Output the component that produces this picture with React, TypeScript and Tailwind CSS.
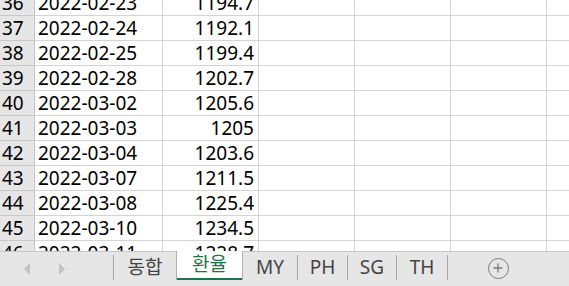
import { Plus } from 'lucide-react';

const ROWS: [number, string, string][] = [
  [36, '2022-02-23', '1194.7'],
  [37, '2022-02-24', '1192.1'],
  [38, '2022-02-25', '1199.4'],
  [39, '2022-02-28', '1202.7'],
  [40, '2022-03-02', '1205.6'],
  [41, '2022-03-03', '1205'],
  [42, '2022-03-04', '1203.6'],
  [43, '2022-03-07', '1211.5'],
  [44, '2022-03-08', '1225.4'],
  [45, '2022-03-10', '1234.5'],
  [46, '2022-03-11', '1228.7'],
];

const TABS = [
  { label: 'MY', w: 'w-[54px]' },
  { label: 'PH', w: 'w-[49px]' },
  { label: 'SG', w: 'w-[48px]' },
  { label: 'TH', w: 'w-[50px]' },
];

const font = { fontFamily: '"Noto Sans", "Noto Sans CJK KR", sans-serif' };

export default function App() {
  return (
    <div className="w-[569px] h-[286px] bg-white overflow-hidden flex flex-col" style={font}>
      {/* Sheet grid */}
      <div className="h-[251px] overflow-hidden">
        <div className="-mt-[9px]">
          {ROWS.map(([n, date, rate]) => (
            <div key={n} className="flex h-[25px] text-[19px] leading-[24px] text-black">
              <div className="w-[35px] shrink-0 bg-[#e6e6e6] border-r border-b border-r-[#c4c4c4] border-b-[#c8c8c8] pl-[2px]">
                {n}
              </div>
              <div className="w-[128px] shrink-0 border-r border-b border-[#d4d4d4] pl-[3px]">{date}</div>
              <div className="w-[96px] shrink-0 border-r border-b border-[#d4d4d4] pr-[4px] text-right">{rate}</div>
              <div className="w-[96px] shrink-0 border-r border-b border-[#d4d4d4]" />
              <div className="w-[96px] shrink-0 border-r border-b border-[#d4d4d4]" />
              <div className="w-[96px] shrink-0 border-r border-b border-[#d4d4d4]" />
              <div className="flex-1 border-b border-[#d4d4d4]" />
            </div>
          ))}
        </div>
      </div>

      {/* Sheet tabs */}
      <div className="h-[35px] flex bg-[#e6e6e6] text-[19px] text-[#444444] relative">
        <div className="absolute left-0 right-0 top-0 h-px bg-[#c6c6c6]" />
        <div className="w-[113px] flex items-center">
          <div className="ml-[24px] w-0 h-0 border-y-[6px] border-y-transparent border-r-[6px] border-r-[#c2c2c2]" />
          <div className="ml-[29px] w-0 h-0 border-y-[6px] border-y-transparent border-l-[6px] border-l-[#c2c2c2]" />
        </div>
        <div className="w-px h-[25px] mt-[4px] bg-[#a6a6a6]" />
        <div className="w-[62px] flex items-center justify-center pb-[3px]">동합</div>
        <div className="w-[67px] h-[29px] relative z-10 bg-white border-x border-[#b0b0b0] flex items-center justify-center pb-[2px] text-[#217346]">
          환율
          <div className="absolute left-0 right-0 bottom-0 h-[2px] bg-[#217346]" />
        </div>
        {TABS.map(t => (
          <div key={t.label} className="flex">
            <div className={`${t.w} flex items-center justify-center pb-[3px]`}>{t.label}</div>
            <div className="w-px h-[25px] mt-[4px] bg-[#a6a6a6]" />
          </div>
        ))}
        <div className="w-[100px] flex items-center justify-center pb-[1px]">
          <div className="w-[21px] h-[21px] rounded-full border-[1.5px] border-[#7a7a7a] flex items-center justify-center">
            <Plus size={14} strokeWidth={2.2} className="text-[#7a7a7a]" />
          </div>
        </div>
      </div>
    </div>
  );
}
